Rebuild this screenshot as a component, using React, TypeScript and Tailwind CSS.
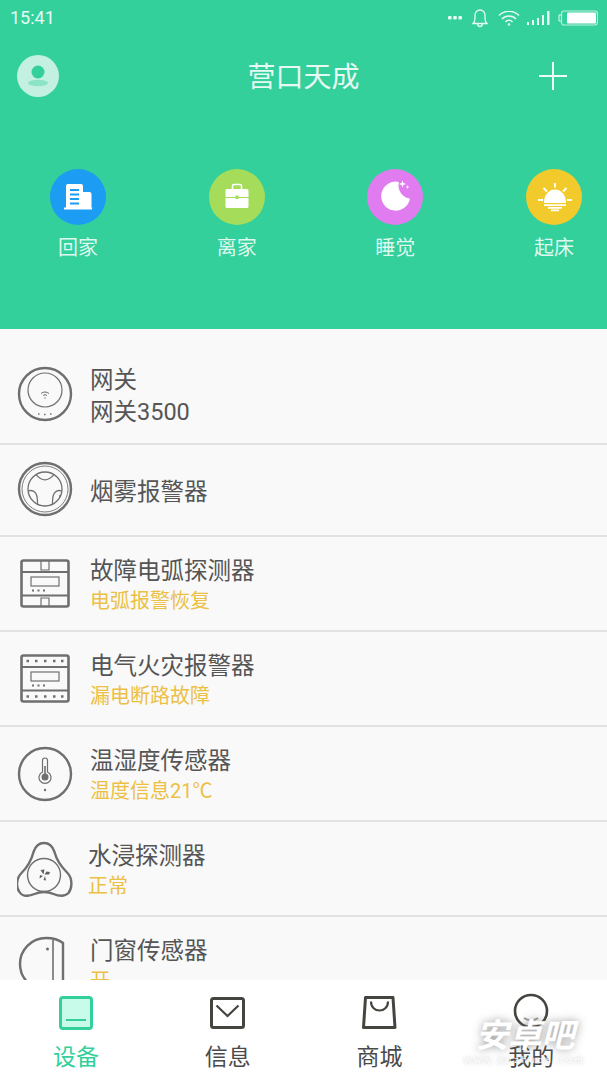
import React from 'react';

const font = { fontFamily: 'Roboto, "Noto Sans CJK SC", "Liberation Sans", sans-serif' };

function Avatar() {
  return (
    <div className="flex h-[42px] w-[42px] items-center justify-center rounded-full bg-[#c4f0e1]">
      <svg width="28" height="28" viewBox="0 0 28 28">
        <circle cx="14" cy="10" r="6.5" fill="#33d09c" />
        <ellipse cx="14" cy="21" rx="10" ry="3.2" fill="#8de3c6" />
      </svg>
    </div>
  );
}

function Scene({ label, color, children }: { label: string; color: string; children: React.ReactNode }) {
  return (
    <div className="flex w-[56px] flex-col items-center">
      <div className={`flex h-[56px] w-[56px] items-center justify-center rounded-full ${color}`}>
        <svg width="56" height="56" viewBox="0 0 56 56">{children}</svg>
      </div>
      <span className="mt-[10px] text-[20px] leading-[26px] whitespace-nowrap text-[#dff8ef]">{label}</span>
    </div>
  );
}

type RowProps = { icon: React.ReactNode; title: string; sub?: string; subDark?: boolean; h: string; left?: string };

function Row({ icon, title, sub, subDark, h, left = 'ml-[17px]' }: RowProps) {
  return (
    <div className={`flex shrink-0 items-center border-b-2 border-[#e2e2e2] pl-[17px] ${h}`}>
      <div className="flex w-[56px] shrink-0 justify-center">{icon}</div>
      <div className={`pt-[5px] ${left}`}>
        <div className="text-[23.5px] leading-[30px] whitespace-nowrap text-[#555555]">{title}</div>
        {sub && (
          <div className={subDark ? 'mt-[2px] text-[23.5px] leading-[30px] text-[#555555]' : 'text-[20px] leading-[30px] text-[#ecc044]'}>
            {sub}
          </div>
        )}
      </div>
    </div>
  );
}

const s = { fill: 'none', stroke: '#6f6f6f', strokeWidth: 2.4 };

function Din({ dots }: { dots?: boolean }) {
  return (
    <svg width="50" height="50" viewBox="0 0 50 50" fill="none" stroke="#6f6f6f">
      <rect x="1.500" y="1.500" width="47" height="46" rx="2" strokeWidth="2.600" />
      <path d="M2 13H48M2 36.500H48" strokeWidth="1.800" />
      <rect x="11" y="18" width="28" height="9" strokeWidth="1.200" />
      <path d="M12 31.500h2M17.500 31.500h2M23 31.500h2" strokeWidth="1.800" />
      {dots ? (
        <path d="M6.500 7h2.500M15 7h2.500M24 7h2.500M33 7h2.500M41 7h2.500M6.500 42.500h2.500M15 42.500h2.500M24 42.500h2.500M33 42.500h2.500M41 42.500h2.500" strokeWidth="2.400" />
      ) : (
        <path d="M21 2v9h8V2M21 47v-8h8v8" strokeWidth="1.200" />
      )}
    </svg>
  );
}

function Tab({ label, active, children }: { label: string; active?: boolean; children: React.ReactNode }) {
  return (
    <div className="flex flex-col items-center">
      <svg width="40" height="40" viewBox="0 0 40 40" fill="none">{children}</svg>
      <span className={`mt-[11px] text-[23px] leading-[30px] whitespace-nowrap ${active ? 'text-[#33d09c]' : 'text-[#4a4a4a]'}`}>{label}</span>
    </div>
  );
}

export default function App() {
  return (
    <div className="relative flex h-[1080px] w-[607px] flex-col overflow-hidden bg-[#f9f9f9]" style={font}>
      {/* 上部 */}
      <div className="h-[329px] shrink-0 bg-[#33d09c]">
        <div className="flex h-[36px] items-center justify-between pr-[9px] pl-[10px] text-[#e6f9f2]">
          <span className="text-[18px] leading-none">15:41</span>
          <div className="flex items-center">
            <svg width="14" height="6" viewBox="0 0 14 6" fill="#e6f9f2"><rect x="0" y="1" width="3.600" height="3.600" rx="1" /><rect x="5.200" y="1" width="3.600" height="3.600" rx="1" /><rect x="10.400" y="1" width="3.600" height="3.600" rx="1" /></svg>
            <svg className="ml-[10px]" width="16" height="20" viewBox="0 0 16 20" fill="none" stroke="#e6f9f2" strokeWidth="1.300"><path d="M1 15.500c1.500-1 2-2.500 2-5V7a5 5 0 0 1 10 0v3.500c0 2.500.5 4 2 5zM5.500 15.500c0 4 5 4 5 0" /></svg>
            <svg className="ml-[10px]" width="22" height="15" viewBox="0 0 22 15" fill="none" stroke="#e6f9f2" strokeWidth="1.500"><path d="M1 4.500a14 14 0 0 1 20 0M4 8a9.500 9.500 0 0 1 14 0M7.500 11a4.500 4.500 0 0 1 7 0" /><circle cx="11" cy="13.500" r="1.300" fill="#e6f9f2" stroke="none" /></svg>
            <svg className="ml-[7px]" width="23" height="15" viewBox="0 0 23 15" fill="#e6f9f2"><rect x="0" y="11" width="2" height="3" /><rect x="5" y="9" width="2" height="5" /><rect x="10" y="7" width="2" height="7" /><rect x="15" y="4" width="2" height="10" /><rect x="20" y="0" width="2.500" height="14" /></svg>
            <svg className="ml-[8px]" width="40" height="16" viewBox="0 0 40 16"><path d="M3 5H1v6h2" fill="none" stroke="#e6f9f2" /><rect x="3.500" y="1" width="36" height="14" rx="2.500" fill="none" stroke="#bdefdd" strokeWidth="1.200" /><rect x="9" y="2.500" width="29" height="11" rx="1" fill="#fff" /></svg>
          </div>
        </div>
        <div className="relative flex h-[80px] items-center justify-between pr-[40px] pl-[17px]">
          <Avatar />
          <span className="absolute inset-x-0 mt-[4px] text-center text-[28px] leading-[40px] text-[#e6f9f2]">营口天成</span>
          <svg width="28" height="28" viewBox="0 0 28 28" stroke="#eefbf6" strokeWidth="2"><path d="M14 0V28M0 14H28" /></svg>
        </div>
        <div className="mt-[53px] flex justify-between pr-[25px] pl-[50px]">
          <Scene label="回家" color="bg-[#1c9cf2]">
            <path d="M14 38.500h28v2H14zM16 38.500V17a2 2 0 0 1 2-2h13a2 2 0 0 1 2 2v6h6.500a2 2 0 0 1 2 2v13.500z" fill="#fff" />
            <path d="M20 21h9M20 25.500h9M20 30h9M20 34.500h9" stroke="#1c9cf2" strokeWidth="2" />
          </Scene>
          <Scene label="离家" color="bg-[#a5dc5a]">
            <path d="M23.500 20v-3a1.500 1.500 0 0 1 1.500-1.500h6a1.500 1.500 0 0 1 1.500 1.500v3" fill="none" stroke="#fff" strokeWidth="1.600" />
            <path d="M18 20h20a1.500 1.500 0 0 1 1.500 1.500v6.500h-23v-6.500A1.500 1.500 0 0 1 18 20zM16.500 29h23v8.500a1.500 1.500 0 0 1-1.500 1.500H18a1.500 1.500 0 0 1-1.500-1.500z" fill="#fff" />
            <rect x="26.500" y="26.500" width="3" height="3.500" fill="#a5dc5a" />
          </Scene>
          <Scene label="睡觉" color="bg-[#e07bf0]">
            <path d="M32 13A14.500 14.500 0 1 0 43 29.500A13 13 0 0 1 32 13z" fill="#fff" />
            <path d="M35.500 11.500l.9 2.600 2.600.9-2.600.9-.9 2.600-.9-2.600-2.600-.9 2.600-.9zM40.500 16l.5 1.500 1.500.5-1.500.5-.5 1.500-.5-1.500-1.500-.5 1.500-.5z" fill="#fff" />
          </Scene>
          <Scene label="起床" color="bg-[#f3ca2c]">
            <path d="M18 34c0-18 22-18 22 0z" fill="#fff" />
            <path d="M29 14v4.500M17.500 19l3.500 3.500M40.500 19L37 22.500M12 31h5M41 31h5" stroke="#fff" strokeWidth="1.800" fill="none" />
            <path d="M18 36.200h22M22 38.800h14M25 41.300h8" stroke="#fff" strokeWidth="1.800" />
          </Scene>
        </div>
      </div>

      {/* 设备列表 */}
      <div className="flex min-h-0 flex-1 flex-col overflow-hidden">
        <Row h="h-[116px] pt-[14px]" title="网关" sub="网关3500" subDark icon={
          <svg className="mt-[2px]" width="56" height="56" viewBox="0 0 56 56" {...s}>
            <circle cx="28" cy="28" r="26" />
            <circle cx="28" cy="24" r="17" strokeWidth="1.200" />
            <path d="M24 27.500a6 6 0 0 1 8 0M26 29.500a3 3 0 0 1 4 0" strokeWidth="1" />
            <path d="M27.500 32h1M21 48h1.500M27 48.500h1.500M33 48h1.500" strokeWidth="1.500" />
          </svg>
        } />
        <Row h="h-[92px] pb-[2px]" title="烟雾报警器" icon={
          <svg width="56" height="56" viewBox="0 0 56 56" {...s}>
            <circle cx="28" cy="28" r="26" />
            <circle cx="28" cy="28" r="23" strokeWidth="0.900" />
            <circle cx="28" cy="28" r="17" strokeWidth="1.300" />
            <path d="M19 13.600Q28 24 37 13.600M11.200 30Q21 27 20.500 43.200M44.800 30Q35 27 35.500 43.200" strokeWidth="1.300" />
            <circle cx="43" cy="35" r="1" fill="#6f6f6f" stroke="none" />
          </svg>
        } />
        <Row h="h-[95px]" title="故障电弧探测器" sub="电弧报警恢复" icon={<Din />} />
        <Row h="h-[95px]" title="电气火灾报警器" sub="漏电断路故障" icon={<Din dots />} />
        <Row h="h-[95px]" title="温湿度传感器" sub="温度信息21℃" icon={
          <svg width="56" height="56" viewBox="0 0 56 56" {...s}>
            <circle cx="28" cy="28" r="26" />
            <path d="M25.500 26V14.500a2.500 2.500 0 0 1 5 0V26a6 6 0 1 1-5 0z" strokeWidth="1.200" />
            <circle cx="28" cy="31" r="3.500" fill="#6f6f6f" stroke="none" />
            <path d="M28 20v9" strokeWidth="1.600" />
            <circle cx="28" cy="44" r="1.200" fill="#6f6f6f" stroke="none" />
          </svg>
        } />
        <Row h="h-[95px]" title="水浸探测器" sub="正常" left="ml-[15px]" icon={
          <svg width="56" height="56" viewBox="0 0 56 56" {...s}>
            <g transform="translate(-0.500 0)">
              <path d="M27.500 2C33 2 36 5 38 11C40 19 46 27 51 32C56 37 56 47 52 52C48 56 42 55 37 53C31 50.500 24 50.500 18 53C13 55 6 56 3 51C-1 46 0 37 5 32C10 27 15 19 17 11C19 5 22 2 27.500 2z" />
              <circle cx="27.500" cy="34" r="16.500" strokeWidth="1.400" />
              <path d="M27 33.500l-3-4.500 4-.5zM28 33.500l2-3 3.500.5-1 2.500zM28.500 35l1 4.500-2.500-.5zM26.500 35l-3.500 2.500.5-3.500z" fill="#5f5f5f" stroke="none" />
            </g>
          </svg>
        } />
        <Row h="h-[95px]" title="门窗传感器" sub="开" icon={
          <svg width="56" height="56" viewBox="0 0 56 56" {...s}>
            <path d="M36 54H29a26 26 0 0 1 0-52c7 0 12 1 17 5v47" />
            <path d="M36 4V54" strokeWidth="1.600" />
            <circle cx="30.500" cy="13" r="1.500" fill="#6f6f6f" stroke="none" />
          </svg>
        } />
      </div>

      {/* 底部导航 */}
      <div className="grid h-[100px] shrink-0 grid-cols-4 bg-white pt-[12px]">
        <Tab label="设备" active>
          <rect x="4.500" y="5.500" width="31" height="31" rx="2.500" fill="#c8fbe9" stroke="#33d09c" strokeWidth="3" />
          <path d="M10 28H30" stroke="#33d09c" strokeWidth="2" />
        </Tab>
        <Tab label="信息">
          <rect x="3.500" y="6.500" width="32" height="29" rx="2" stroke="#454540" strokeWidth="3" />
          <path d="M8.500 13.500L19.500 24L30.500 13.500" stroke="#454540" strokeWidth="2.200" />
        </Tab>
        <Tab label="商城">
          <path d="M6.500 5.500H34L36 35.500H4.500z" stroke="#454540" strokeWidth="3" strokeLinejoin="round" />
          <path d="M12 9.500c0 12 17 12 17 0" stroke="#454540" strokeWidth="2.200" />
        </Tab>
        <Tab label="我的">
          <circle cx="20" cy="19" r="16" stroke="#454540" strokeWidth="2.600" />
          <path d="M13 26c4 3 10 3 14 0" stroke="#9a9a9a" strokeWidth="2" />
        </Tab>
      </div>

      {/* 水印 */}
      <div className="absolute top-[1018px] left-[473px] flex w-[104px] flex-col items-center text-white">
        <span className="text-[33px] leading-[36px] font-bold italic whitespace-nowrap [text-shadow:0_0_8px_rgba(110,110,110,0.7)]">安卓吧</span>
        <span className="text-[9px] leading-[12px] tracking-[3px] whitespace-nowrap [text-shadow:0_0_4px_rgba(110,110,110,0.6)]" style={{ fontFamily: '"Liberation Sans", sans-serif' }}>www.anzhuo8.com</span>
      </div>
    </div>
  );
}
